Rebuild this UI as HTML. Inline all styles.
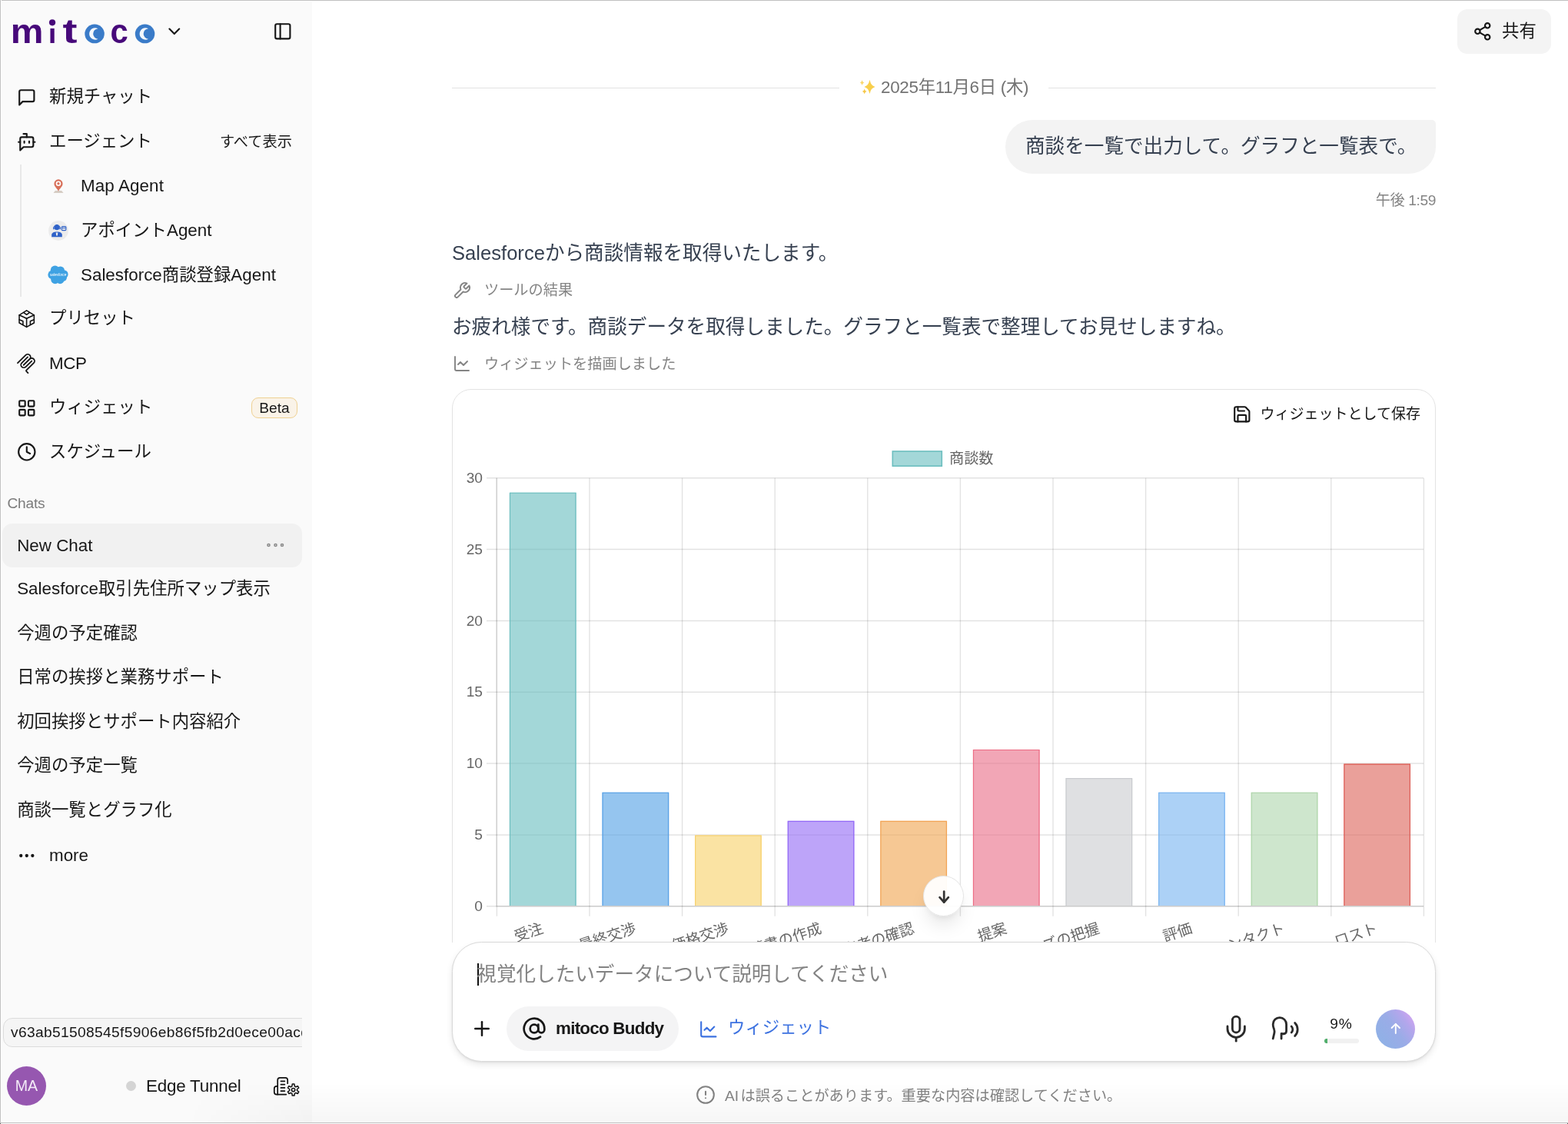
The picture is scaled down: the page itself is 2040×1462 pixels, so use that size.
<!DOCTYPE html>
<html lang="ja">
<head>
<meta charset="utf-8">
<title>mitoco Buddy</title>
<style>
*{box-sizing:border-box;margin:0;padding:0}
html,body{width:2040px;height:1462px;overflow:hidden;background:#fff}
body{position:relative;font-family:"Liberation Sans","Noto Sans CJK JP",sans-serif;color:#171717;-webkit-font-smoothing:antialiased}
.abs,.t,.ic{position:absolute}
.t{white-space:nowrap;line-height:32px;font-size:22.4px}
.ic{display:block;fill:none;stroke:currentColor;stroke-width:2;stroke-linecap:round;stroke-linejoin:round}
#sidebar{will-change:transform;position:absolute;left:0;top:0;width:406px;height:1462px;background:#fafafa;overflow:hidden;z-index:10}
#main{will-change:transform;position:absolute;left:0;top:0;width:2040px;height:1462px;overflow:hidden}
#frame-top{position:absolute;left:0;top:0;width:2040px;height:2px;background:linear-gradient(#c0c0c0 0 1px,#fff 1px 2px);z-index:50}
#frame-left{position:absolute;left:0;top:0;width:2px;height:1462px;background:linear-gradient(to right,#c0c0c0 0 1px,#fff 1px 2px);z-index:51}
#frame-bottom{position:absolute;left:0;top:1460px;width:2040px;height:2px;background:linear-gradient(#c0c0c0 0 1px,#fdfdfd 1px 2px);z-index:52}
#frame-bottom:before,#frame-bottom:after{content:"";position:absolute;top:1px;width:1px;height:1px;background:#555}
#frame-bottom:before{left:0}
#frame-bottom:after{right:0}
#bottom-shade{position:absolute;left:406px;top:1408px;width:1634px;height:52px;background:linear-gradient(to bottom,rgba(0,0,0,0),rgba(0,0,0,.036));z-index:49;pointer-events:none}
#bottom-shade2{position:absolute;left:240px;top:1408px;width:166px;height:52px;background:linear-gradient(to bottom,rgba(0,0,0,0),rgba(0,0,0,.03));-webkit-mask-image:linear-gradient(to right,transparent,#000);mask-image:linear-gradient(to right,transparent,#000);z-index:49;pointer-events:none}
.nav{font-size:22.4px;color:#171717}
.small{font-size:19.2px}
.gray{color:#8a8a8a}
.body-text{font-size:25.6px;color:#374151;line-height:40px}
</style>
</head>
<body>
<aside id="sidebar">
<!-- logo -->
<svg class="abs" id="logo" style="left:10px;top:16px" width="200" height="50" viewBox="10 16 200 50" role="img" aria-label="mitoco">
  <g font-family="'Liberation Sans',sans-serif" font-weight="700" font-size="44" fill="#47097a">
    <text x="13.700" y="55.8" textLength="42.700" lengthAdjust="spacingAndGlyphs">m</text>
    <clipPath id="istem"><rect x="60" y="37" width="16" height="26"/></clipPath><text x="62.700" y="55.8" textLength="10.700" lengthAdjust="spacingAndGlyphs" clip-path="url(#istem)">i</text><circle cx="68.050" cy="29.300" r="4.100"/>
    <text x="81.6" y="55.8" textLength="19" lengthAdjust="spacingAndGlyphs">t</text>
    <text x="110" y="55.8" textLength="26" lengthAdjust="spacingAndGlyphs" fill="none">o</text>
    <text x="143.4" y="55.8" textLength="23.300" lengthAdjust="spacingAndGlyphs">c</text>
    <text x="175.500" y="55.8" textLength="26" lengthAdjust="spacingAndGlyphs" fill="none">o</text>
  </g>
  <ellipse cx="123.050" cy="43.900" rx="12.750" ry="12.350" fill="#3a7bc8"/>
  <path d="M127.45 37.15A7.7 7.7 0 1 0 127.45 50.75A6.82 6.82 0 0 1 127.45 37.15z" fill="#fff" opacity=".94"/>
  <ellipse cx="188.550" cy="43.900" rx="12.750" ry="12.350" fill="#3a7bc8"/>
  <path d="M192.95 37.15A7.7 7.7 0 1 0 192.95 50.75A6.82 6.82 0 0 1 192.95 37.15z" fill="#fff" opacity=".94"/>
</svg>
<svg class="ic" style="left:213.9px;top:28px;color:#171717" width="25.6" height="25.6" viewBox="0 0 24 24"><path d="m6 9 6 6 6-6"/></svg>
<svg class="ic" style="left:355.2px;top:28.2px;color:#171717" width="25.6" height="25.6" viewBox="0 0 24 24"><rect width="18" height="18" x="3" y="3" rx="2"/><path d="M9 3v18"/></svg>

<!-- nav -->
<svg class="ic" style="left:22px;top:114px" width="25.6" height="25.6" viewBox="0 0 24 24"><path d="M21 15a2 2 0 0 1-2 2H7l-4 4V5a2 2 0 0 1 2-2h14a2 2 0 0 1 2 2z"/></svg>
<div class="t nav" style="left:64px;top:109.7px">新規チャット</div>

<svg class="ic" style="left:22px;top:172px" width="25.6" height="25.6" viewBox="0 0 24 24"><path d="M12 6V2H8"/><path d="m8 18-4 4V8a2 2 0 0 1 2-2h12a2 2 0 0 1 2 2v8a2 2 0 0 1-2 2Z"/><path d="M2 12h2"/><path d="M9 11v2"/><path d="M15 11v2"/><path d="M20 12h2"/></svg>
<div class="t nav" style="left:64px;top:167.7px">エージェント</div>
<div class="t small" style="left:286px;top:169.3px;color:#171717">すべて表示</div>

<div class="abs" style="left:26px;top:214px;width:2px;height:172px;background:#e8e8e8"></div>

<!-- agents -->
<svg class="abs" style="left:62.6px;top:227.4px" width="26" height="26" viewBox="0 0 26 26"><path d="M6.500 24h13l-2.300-2.900H8.800z" fill="#d6cdc4"/><path d="M13 21.700c-1.300-3.400-5.600-6-5.600-9.800a5.600 5.600 0 0 1 11.200 0c0 3.800-4.300 6.400-5.600 9.800z" fill="#d8705a"/><circle cx="13" cy="11.800" r="3.300" fill="#fff"/><circle cx="13" cy="11.800" r="1.700" fill="#d8705a"/></svg>
<div class="t nav" style="left:105px;top:225.5px;letter-spacing:.1px">Map Agent</div>

<svg class="abs" style="left:62.8px;top:287px" width="26" height="26" viewBox="0 0 26 26"><circle cx="13" cy="13" r="12.900" fill="#ececec"/><g fill="#2f62c8"><circle cx="11" cy="9" r="3.300"/><path d="M6.800 9.600a4.200 4.200 0 0 1 8.400 0" fill="none" stroke="#2f62c8" stroke-width="1"/><rect x="6.100" y="8.600" width="1.500" height="2.800" rx=".7"/><rect x="14.400" y="8.600" width="1.500" height="2.800" rx=".7"/><path d="M4.200 21.200v-2.800c0-2.200 2.600-3.800 6.800-3.800s6.800 1.600 6.800 3.800v2.800z"/></g><path d="M9.700 15.500h2.600l-.5 4h-1.600z" fill="#ececec"/><rect x="17.300" y="7.600" width="5.600" height="5" rx="1" fill="#ececec" stroke="#2f62c8" stroke-width="1.100"/><path d="M17.300 9.700h5.600" stroke="#2f62c8" stroke-width="1"/></svg>
<div class="t nav" style="left:105px;top:283.7px">アポイントAgent</div>

<svg class="abs" style="left:62.2px;top:344px" width="27" height="27" viewBox="0 0 27 27"><g fill="#3fa2e3"><circle cx="9.600" cy="7.400" r="5.900"/><circle cx="16.600" cy="7.900" r="5.400"/><circle cx="21" cy="12.800" r="5.600"/><circle cx="6.200" cy="13.400" r="5.800"/><circle cx="9.800" cy="19.600" r="5.600"/><circle cx="16.200" cy="19.800" r="5.400"/><circle cx="13.500" cy="13.500" r="7.500"/><circle cx="20.200" cy="17" r="4.800"/></g><text x="13.600" y="15.100" text-anchor="middle" font-family="'Liberation Sans',sans-serif" font-size="4.700" font-style="italic" fill="#fff">salesforce</text></svg>
<div class="t nav" style="left:105px;top:341.7px">Salesforce商談登録Agent</div>

<!-- preset -->
<svg class="ic" style="left:20px;top:400px;stroke-width:1.550;color:#111" width="30" height="30" viewBox="20 400 30 30"><path d="M34.600 403.850 44.350 409.800V420L34.600 425.400 25.050 420V409.800z"/><path d="M34.600 414.250V425.400"/><path d="M34.600 414.250 25.050 409.800"/><path d="M34.600 414.250l9.750-4.450"/><path d="M31 406.600l3.600 2.700 3.600-2.700"/><path d="M25.050 415.700l4.850 2.100v4.700"/><path d="M44.350 415.700l-4.950 2.100v4.700"/></svg>
<div class="t nav" style="left:64px;top:397.7px">プリセット</div>

<!-- MCP -->
<svg class="abs" style="left:21px;top:459.500px" width="26" height="26" viewBox="0 0 24 24" fill="#171717" fill-rule="evenodd"><path d="M15.688 2.343a2.588 2.588 0 00-3.610 0l-9.626 9.440a.863.863 0 01-1.203 0 .823.823 0 010-1.180l9.626-9.440a4.313 4.313 0 016.016 0 4.116 4.116 0 011.204 3.540 4.300 4.300 0 013.609 1.180l.050.050a4.115 4.115 0 010 5.900l-8.706 8.537a.274.274 0 000 .393l1.788 1.754a.823.823 0 010 1.180.863.863 0 01-1.203 0l-1.788-1.753a1.920 1.920 0 010-2.754l8.706-8.538a2.470 2.470 0 000-3.540l-.050-.049a2.588 2.588 0 00-3.607-.003l-7.172 7.034-.002.002-.098.097a.863.863 0 01-1.204 0 .823.823 0 010-1.180l7.273-7.133a2.470 2.470 0 00-.003-3.537z"/><path d="M14.485 4.703a.823.823 0 000-1.180.863.863 0 00-1.204 0l-7.119 6.982a4.115 4.115 0 000 5.900 4.314 4.314 0 006.016 0l7.120-6.982a.823.823 0 000-1.180.863.863 0 00-1.204 0l-7.119 6.982a2.588 2.588 0 01-3.610 0 2.470 2.470 0 010-3.540l7.120-6.982z"/></svg>
<div class="t nav" style="left:64px;top:456.7px;letter-spacing:-.4px">MCP</div>

<!-- widget -->
<svg class="ic" style="left:22px;top:517.500px" width="25.6" height="25.6" viewBox="0 0 24 24"><rect width="7" height="7" x="3" y="3" rx="1"/><rect width="7" height="7" x="14" y="3" rx="1"/><rect width="7" height="7" x="14" y="14" rx="1"/><rect width="7" height="7" x="3" y="14" rx="1"/></svg>
<div class="t nav" style="left:64px;top:513.7px">ウィジェット</div>
<div class="abs" style="left:327px;top:517px;width:60px;height:27px;border:1.500px solid #efd192;background:#faf3e8;border-radius:9px"></div>
<div class="t small" style="left:327px;top:514.500px;width:60px;text-align:center;color:#171717">Beta</div>

<!-- schedule -->
<svg class="ic" style="left:22px;top:575px" width="25.6" height="25.6" viewBox="0 0 24 24"><circle cx="12" cy="12" r="10"/><polyline points="12 6 12 12 16 14"/></svg>
<div class="t nav" style="left:64px;top:571.6px">スケジュール</div>

<!-- chats -->
<div class="t small" style="left:9.5px;top:639px;color:#7c7c7c;letter-spacing:-.25px">Chats</div>
<div class="abs" style="left:3.3px;top:681px;width:389.7px;height:57px;border-radius:13px;background:#f1f1f1"></div>
<div class="t nav" style="left:22.2px;top:693.5px">New Chat</div>
<svg class="abs" style="left:346px;top:704px" width="26" height="10" viewBox="0 0 26 10"><g fill="none" stroke="#8a8a8a" stroke-width="1.600"><circle cx="3.500" cy="5" r="1.500"/><circle cx="12.500" cy="5" r="1.500"/><circle cx="21" cy="5" r="1.500"/></g></svg>
<div class="t nav" style="left:22.2px;top:750px">Salesforce取引先住所マップ表示</div>
<div class="t nav" style="left:22.2px;top:807.5px">今週の予定確認</div>
<div class="t nav" style="left:22.2px;top:864.5px">日常の挨拶と業務サポート</div>
<div class="t nav" style="left:22.2px;top:923.2px">初回挨拶とサポート内容紹介</div>
<div class="t nav" style="left:22.2px;top:979.5px">今週の予定一覧</div>
<div class="t nav" style="left:22.2px;top:1038px">商談一覧とグラフ化</div>
<svg class="abs" style="left:24px;top:1107.8px" width="24" height="10" viewBox="0 0 24 10"><g fill="#171717"><circle cx="3.250" cy="5" r="2.150"/><circle cx="10.800" cy="5" r="2.150"/><circle cx="18.350" cy="5" r="2.150"/></g></svg>
<div class="t nav" style="left:64px;top:1097.2px">more</div>

<!-- version -->
<div class="abs" style="left:3.5px;top:1324px;width:389.5px;height:38px;overflow:hidden">
  <div class="abs" style="left:0;top:0;width:440px;height:38px;border:1.500px solid #dcdcdc;border-radius:12px;background:#f5f5f5"></div>
  <div class="t small" style="left:10.5px;top:2px;line-height:34px;color:#171717;letter-spacing:.34px">v63ab51508545f5906eb86f5fb2d0ece00acd</div>
</div>

<!-- user -->
<div class="abs" style="left:9px;top:1387px;width:51px;height:51px;border-radius:50%;background:#9657b0"></div>
<div class="t" style="left:9px;top:1387px;width:51px;line-height:51px;text-align:center;color:#f3eaf7;font-size:19.6px">MA</div>
<div class="abs" style="left:164px;top:1406px;width:13px;height:13px;border-radius:50%;background:#d4d4d4"></div>
<div class="t nav" style="left:190px;top:1397px;letter-spacing:-.2px">Edge Tunnel</div>
<svg class="ic" style="left:350px;top:1395px;stroke-width:1.7;color:#111" width="45" height="35" viewBox="350 1395 45 35"><path d="M374.2 1409.2V1404.9a3 3 0 0 0-3-3h-7a3 3 0 0 0-3 3v18.700"/><path d="M361.200 1412.800h-1.200a3.200 3.200 0 0 0-3.200 3.200v4.400a3.200 3.200 0 0 0 3.200 3.200h12.300"/><path d="M365.400 1406.300h5M365.400 1410.600h5M365.400 1414.900h5M365.400 1419.100h5"/><path d="M379.89 1412.90 L380.28 1410.12 L382.92 1410.12 L383.31 1412.90 L384.81 1413.77 L387.42 1412.71 L388.74 1415.00 L386.52 1416.73 L386.52 1418.47 L388.74 1420.20 L387.42 1422.49 L384.81 1421.43 L383.31 1422.30 L382.92 1425.08 L380.28 1425.08 L379.89 1422.30 L378.39 1421.43 L375.78 1422.49 L374.46 1420.20 L376.68 1418.47 L376.68 1416.73 L374.46 1415.00 L375.78 1412.71 L378.39 1413.77z" stroke-width="1.500"/><circle cx="381.600" cy="1417.600" r="2.200" stroke-width="1.500"/></svg>

</aside>
<main id="main">

<!-- share -->
<div class="abs" style="left:1896px;top:12px;width:122px;height:58px;border-radius:13px;background:#f4f4f4"></div>
<svg class="ic" style="left:1916px;top:28px;color:#171717" width="25.6" height="25.6" viewBox="0 0 24 24"><circle cx="18" cy="5" r="3"/><circle cx="6" cy="12" r="3"/><circle cx="18" cy="19" r="3"/><line x1="8.59" x2="15.42" y1="13.51" y2="17.49"/><line x1="15.41" x2="8.59" y1="6.51" y2="10.49"/></svg>
<div class="t nav" style="left:1954px;top:25px">共有</div>

<!-- date separator -->
<div class="abs" style="left:588px;top:113.5px;width:504px;height:1.5px;background:#e2e2e2"></div>
<div class="abs" style="left:1364px;top:113.5px;width:504px;height:1.5px;background:#e2e2e2"></div>
<svg class="abs" style="left:1112px;top:98px" width="30" height="30" viewBox="1112 98 30 30" role="img" aria-label="✨"><path d="M1131.50 103.70C1133.06 109.66 1134.00 110.88 1138.60 112.90C1134.00 114.92 1133.06 116.14 1131.50 122.10C1129.94 116.14 1129.00 114.92 1124.40 112.90C1129.00 110.88 1129.94 109.66 1131.50 103.70z" fill="#f8cf4c"/><path d="M1121.60 103.90C1122.24 106.23 1122.62 106.71 1124.50 107.50C1122.62 108.29 1122.24 108.77 1121.60 111.10C1120.96 108.77 1120.58 108.29 1118.70 107.50C1120.58 106.71 1120.96 106.23 1121.60 103.90z" fill="#f9d668"/><path d="M1124.70 115.30C1125.34 117.63 1125.72 118.11 1127.60 118.90C1125.72 119.69 1125.34 120.17 1124.70 122.50C1124.06 120.17 1123.68 119.69 1121.80 118.90C1123.68 118.11 1124.06 117.63 1124.70 115.30z" fill="#f6c84a"/></svg>
<div class="t" style="left:1146px;top:97.8px;font-size:22.4px;color:#737373;letter-spacing:-.28px">2025年11月6日 (木)</div>

<!-- user bubble -->
<div class="abs" style="left:1308px;top:156px;width:560px;height:70px;border-radius:35px 5px 35px 35px;background:#f3f3f3"></div>
<div class="t body-text" style="left:1334px;top:170px">商談を一覧で出力して。グラフと一覧表で。</div>
<div class="t small" style="left:1668px;top:245.2px;width:200px;text-align:right;color:#848484;letter-spacing:-.4px">午後 1:59</div>

<!-- assistant -->
<div class="t body-text" style="left:588px;top:309.2px">Salesforceから商談情報を取得いたします。</div>
<svg class="ic" style="left:589px;top:365.5px;color:#848484;stroke-width:1.900" width="24" height="24" viewBox="0 0 24 24"><path d="M14.7 6.3a1 1 0 0 0 0 1.4l1.6 1.6a1 1 0 0 0 1.4 0l3.770-3.770a6 6 0 0 1-7.940 7.940l-6.910 6.910a2.120 2.120 0 0 1-3-3l6.910-6.910a6 6 0 0 1 7.940-7.940l-3.760 3.760z"/></svg>
<div class="t small" style="left:630px;top:362px;color:#848484">ツールの結果</div>
<div class="t body-text" style="left:588px;top:405.2px">お疲れ様です。商談データを取得しました。グラフと一覧表で整理してお見せしますね。</div>
<svg class="ic" style="left:589px;top:461px;color:#848484;stroke-width:1.900" width="24" height="24" viewBox="0 0 24 24"><path d="M3 3v16a2 2 0 0 0 2 2h16"/><path d="m19 9-5 5-4-4-3 3"/></svg>
<div class="t small" style="left:630px;top:457.8px;color:#848484">ウィジェットを描画しました</div>

<!-- widget card -->
<div class="abs" style="left:588px;top:506px;width:1280px;height:800px;border:1.500px solid #e3e3e3;border-radius:25px;background:#fff"></div>
<svg class="ic" style="left:1603px;top:526px;color:#171717" width="25.6" height="25.6" viewBox="0 0 24 24"><path d="M15.2 3a2 2 0 0 1 1.4.6l3.8 3.8a2 2 0 0 1 .6 1.4V19a2 2 0 0 1-2 2H5a2 2 0 0 1-2-2V5a2 2 0 0 1 2-2z"/><path d="M17 21v-7a1 1 0 0 0-1-1H8a1 1 0 0 0-1 1v7"/><path d="M7 3v4a1 1 0 0 0 1 1h7"/></svg>
<div class="t" style="left:1639.5px;top:523.3px;font-size:19.03px;color:#171717">ウィジェットとして保存</div>
<svg class="abs" id="chart" style="left:588px;top:506px" width="1280" height="760" viewBox="588 506 1280 760" font-family="'Liberation Sans','Noto Sans CJK JP',sans-serif" font-size="19.2">
<g stroke="rgba(0,0,0,0.112)" stroke-width="1.5" fill="none"><path d="M633.0 1178.8H1852.0"/><path d="M633.0 1086.0H1852.0"/><path d="M633.0 993.1H1852.0"/><path d="M633.0 900.2H1852.0"/><path d="M633.0 807.4H1852.0"/><path d="M633.0 714.5H1852.0"/><path d="M633.0 621.7H1852.0"/><path d="M646.4 621.7V1191.8" stroke-width="1.4"/><path d="M767.0 621.7V1191.8" stroke-width="1.4"/><path d="M887.6 621.7V1191.8" stroke-width="1.4"/><path d="M1008.2 621.7V1191.8" stroke-width="1.4"/><path d="M1128.8 621.7V1191.8" stroke-width="1.4"/><path d="M1249.4 621.7V1191.8" stroke-width="1.4"/><path d="M1370.0 621.7V1191.8" stroke-width="1.4"/><path d="M1490.6 621.7V1191.8" stroke-width="1.4"/><path d="M1611.2 621.7V1191.8" stroke-width="1.4"/><path d="M1731.8 621.7V1191.8" stroke-width="1.4"/><path d="M1852.4 621.7V1191.8" stroke-width="1.4"/></g>
<path d="M646.0 621.7V1178.8H1852.0" stroke="rgba(0,0,0,0.1)" stroke-width="1.5" fill="none"/>
<rect x="662.9" y="640.7" width="86.8" height="537.3" fill="rgba(101,189,190,0.60)"/>
<path d="M663.48 1178.0V641.27H748.97V1178.0" fill="none" stroke="#6cbebf" stroke-width="1.15"/>
<rect x="783.5" y="1030.6" width="86.8" height="147.4" fill="rgba(78,159,228,0.60)"/>
<path d="M784.08 1178.0V1031.24H869.57V1178.0" fill="none" stroke="#57a0e5" stroke-width="1.15"/>
<rect x="904.1" y="1086.4" width="86.8" height="91.6" fill="rgba(247,208,101,0.60)"/>
<path d="M904.68 1178.0V1086.95H990.17V1178.0" fill="none" stroke="#f7d06b" stroke-width="1.15"/>
<rect x="1024.7" y="1067.8" width="86.8" height="110.2" fill="rgba(145,104,245,0.60)"/>
<path d="M1025.28 1178.0V1068.38H1110.77V1178.0" fill="none" stroke="#9268f7" stroke-width="1.15"/>
<rect x="1145.3" y="1067.8" width="86.8" height="110.2" fill="rgba(240,163,77,0.60)"/>
<path d="M1145.88 1178.0V1068.38H1231.37V1178.0" fill="none" stroke="#f2a354" stroke-width="1.15"/>
<rect x="1265.9" y="974.9" width="86.8" height="203.1" fill="rgba(233,106,133,0.60)"/>
<path d="M1266.48 1178.0V975.53H1351.97V1178.0" fill="none" stroke="#ed6d85" stroke-width="1.15"/>
<rect x="1386.5" y="1012.1" width="86.8" height="165.9" fill="rgba(201,203,207,0.60)"/>
<path d="M1387.08 1178.0V1012.67H1472.57V1178.0" fill="none" stroke="#c9cbcf" stroke-width="1.15"/>
<rect x="1507.1" y="1030.6" width="86.8" height="147.4" fill="rgba(117,179,240,0.60)"/>
<path d="M1507.68 1178.0V1031.24H1593.17V1178.0" fill="none" stroke="#78b3f0" stroke-width="1.15"/>
<rect x="1627.7" y="1030.6" width="86.8" height="147.4" fill="rgba(174,213,171,0.60)"/>
<path d="M1628.28 1178.0V1031.24H1713.77V1178.0" fill="none" stroke="#afd5ab" stroke-width="1.15"/>
<rect x="1748.3" y="993.5" width="86.8" height="184.5" fill="rgba(220,97,87,0.60)"/>
<path d="M1748.88 1178.0V994.10H1834.37V1178.0" fill="none" stroke="#dd5e56" stroke-width="1.15"/>
<g fill="#666" text-anchor="end"><text x="628" y="1184.9">0</text><text x="628" y="1092.0">5</text><text x="628" y="999.2">10</text><text x="628" y="906.4">15</text><text x="628" y="813.5">20</text><text x="628" y="720.6">25</text><text x="628" y="627.8">30</text></g>
<g fill="#666" text-anchor="end"><text transform="translate(702.7 1196.7) rotate(-18.4)" x="0" y="17">受注</text><text transform="translate(823.3 1196.7) rotate(-18.4)" x="0" y="17">最終交渉</text><text transform="translate(943.9 1196.7) rotate(-18.4)" x="0" y="17">価格交渉</text><text transform="translate(1064.5 1196.7) rotate(-18.4)" x="0" y="17">提案書/見積書の作成</text><text transform="translate(1185.1 1196.7) rotate(-18.4)" x="0" y="17">意思決定者の確認</text><text transform="translate(1305.7 1196.7) rotate(-18.4)" x="0" y="17">提案</text><text transform="translate(1426.3 1196.7) rotate(-18.4)" x="0" y="17">ニーズの把握</text><text transform="translate(1546.9 1196.7) rotate(-18.4)" x="0" y="17">評価</text><text transform="translate(1667.5 1196.7) rotate(-18.4)" x="0" y="17">最初のコンタクト</text><text transform="translate(1788.1 1196.7) rotate(-18.4)" x="0" y="17">ロスト</text></g>
<rect x="1161.3" y="587" width="64" height="19.2" fill="rgba(101,189,190,0.60)" stroke="#6cbebf" stroke-width="1.6"/>
<text x="1235" y="603" fill="#666">商談数</text>
</svg>

<!-- scroll to bottom -->
<div class="abs" style="left:1201px;top:1139px;width:53px;height:53px;border-radius:50%;background:rgba(255,255,255,.94);border:1.500px solid #e4e4e4;box-shadow:0 16px 24px -5px rgba(0,0,0,.10),0 6px 10px -6px rgba(0,0,0,.10)"></div>
<svg class="ic" style="left:1216px;top:1154px;color:#333;stroke-width:2.700" width="24" height="24" viewBox="1216 1154 24 24"><path d="M1228.200 1159.500V1173.500"/><path d="M1222.500 1167.200l5.700 6.300l5.700-6.300"/></svg>

<!-- fade area under composer -->
<div class="abs" style="left:406px;top:1226px;width:1634px;height:236px;background:#fff"></div>

<!-- composer -->
<div class="abs" style="left:588px;top:1225px;width:1280px;height:156px;border:1.500px solid #d9d9d9;border-radius:38.4px;background:#fff;box-shadow:0 4px 9px rgba(0,0,0,.09),0 1px 3px rgba(0,0,0,.08)"></div>
<div class="abs" style="left:620.500px;top:1253px;width:2px;height:29px;background:#111"></div>
<div class="t" style="left:620.3px;top:1247px;font-size:25.6px;line-height:40px;color:#838383">視覚化したいデータについて説明してください</div>
<svg class="ic" style="left:612px;top:1323px;color:#171717;stroke-width:2" width="30" height="30" viewBox="0 0 24 24"><path d="M5 12h14"/><path d="M12 5v14"/></svg>
<div class="abs" style="left:659px;top:1309px;width:224px;height:58px;border-radius:29px;background:#f4f4f5"></div>
<svg class="ic" style="left:679px;top:1322px;color:#171717;stroke-width:2" width="32" height="32" viewBox="0 0 24 24"><circle cx="12" cy="12" r="4"/><path d="M16 8v5a3 3 0 0 0 6 0v-1a10 10 0 1 0-4 8"/></svg>
<div class="t" style="left:723px;top:1322px;font-size:22.4px;font-weight:700;color:#171717;letter-spacing:-.75px">mitoco Buddy</div>
<svg class="ic" style="left:909px;top:1326px;color:#3d72e0;stroke-width:2" width="25.6" height="25.6" viewBox="0 0 24 24"><path d="M3 3v16a2 2 0 0 0 2 2h16"/><path d="m19 9-5 5-4-4-3 3"/></svg>
<div class="t" style="left:947px;top:1321px;font-size:22.4px;color:#3d72e0">ウィジェット</div>

<svg class="ic" style="left:1588.8px;top:1318.9px;color:#2a2a2a;stroke-width:1.75" width="38.4" height="38.4" viewBox="0 0 24 24"><path d="M12 2a3 3 0 0 0-3 3v7a3 3 0 0 0 6 0V5a3 3 0 0 0-3-3Z"/><path d="M19 10v2a7 7 0 0 1-14 0v-2"/><line x1="12" x2="12" y1="19" y2="22"/></svg>
<svg class="ic" style="left:1653px;top:1318.8px;color:#2a2a2a;stroke-width:1.75" width="38.4" height="38.4" viewBox="0 0 24 24"><path d="M8.8 20v-4.100l1.900.2a2.300 2.300 0 0 0 2.164-2.100V8.300A5.370 5.370 0 0 0 2 8.250c0 2.800.656 3.054 1 4.550a5.770 5.770 0 0 1 .029 2.758L2 20"/><path d="M19.800 17.800a7.500 7.500 0 0 0 .003-10.603"/><path d="M17 15a3.500 3.500 0 0 0-.025-4.975"/></svg>
<div class="t" style="left:1715px;top:1316px;width:60px;text-align:center;font-size:19.2px;color:#171717;letter-spacing:.8px">9%</div>
<div class="abs" style="left:1723px;top:1351px;width:45px;height:6px;border-radius:3px;background:#f1f1f1"></div>
<div class="abs" style="left:1723px;top:1351px;width:4.200px;height:6px;border-radius:3px 0 0 3px;background:#50ae6b"></div>
<div class="abs" style="left:1790px;top:1313px;width:51px;height:51px;border-radius:50%;background:linear-gradient(55deg,#8fb1e6 12%,#9aace7 50%,#b4a6ec 74%,#dca4f2 96%)"></div>
<svg class="ic" style="left:1804px;top:1326px;color:#fff;stroke-width:1.900" width="24" height="24" viewBox="1804 1326 24 24"><path d="M1815.800 1344V1331.900"/><path d="M1810.600 1337l5.200-5.200l5.200 5.200"/></svg>

<!-- footer -->
<svg class="ic" style="left:905px;top:1410.7px;color:#848484;stroke-width:1.900" width="26" height="26" viewBox="0 0 24 24"><circle cx="12" cy="12" r="10"/><line x1="12" x2="12" y1="8" y2="12"/><line x1="12" x2="12.010" y1="16" y2="16"/></svg>
<div class="t small" style="left:943px;top:1409.5px;color:#848484;word-spacing:-3px">AI は誤ることがあります。重要な内容は確認してください。</div>

</main>
<div id="bottom-shade"></div><div id="bottom-shade2"></div>
<div id="frame-top"></div><div id="frame-left"></div><div id="frame-bottom"></div>
</body>
</html>
